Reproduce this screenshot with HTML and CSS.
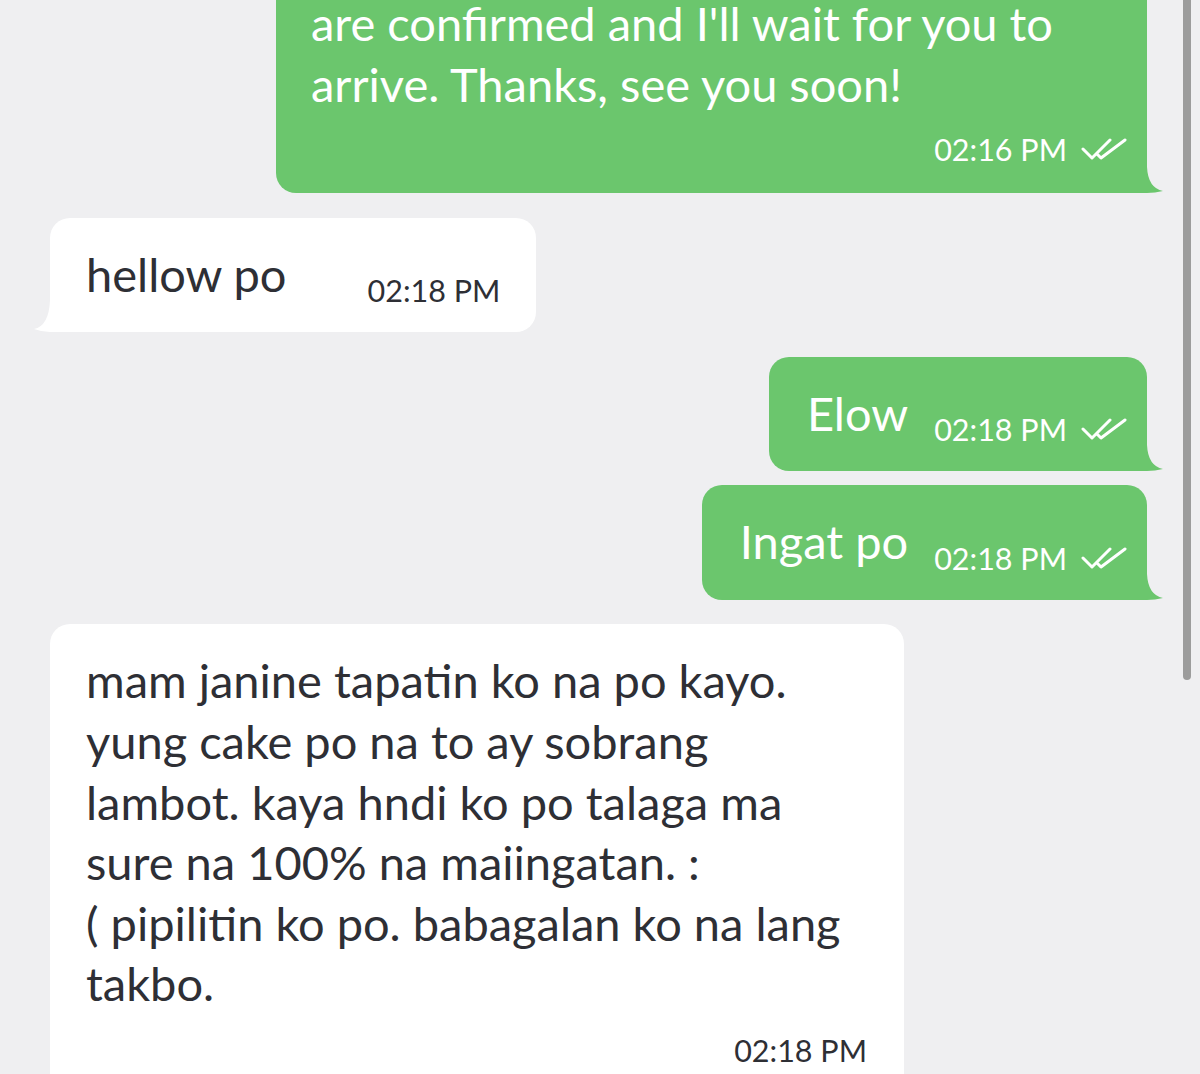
FILE: index.html
```html
<!DOCTYPE html>
<html lang="en">
<head>
    <meta charset="UTF-8">
    <meta name="viewport" content="width=device-width, initial-scale=1.0">
    <title>Chat</title>
    <link rel="stylesheet" href="styles.css">
</head>
<body>
  <div class="chat">
    <div class="chat-list">

      <div class="row sent">
        <div class="bubble bubble-sent long">
          <p class="text">are confirmed and I'll wait for you to arrive. Thanks, see you soon!</p>
          <div class="meta">
            <span class="time">02:16 PM</span>
            <svg class="read" viewBox="0 0 46 22"><path d="M2 11 L11 20 L29 2 M16 16 L20 20 L44 2"/></svg>
          </div>
          <svg class="tail tail-right" viewBox="0 0 16 26"><path d="M0 0 Q1 21 16 24 Q8 26 0 26 Z"/></svg>
        </div>
      </div>

      <div class="row received">
        <div class="bubble bubble-received short">
          <p class="text">hellow po</p>
          <div class="meta wide">
            <span class="time">02:18 PM</span>
          </div>
          <svg class="tail tail-left" viewBox="0 0 16 32"><path d="M16 0 Q15 26 0 29 Q8 32 16 32 Z"/></svg>
        </div>
      </div>

      <div class="row sent">
        <div class="bubble bubble-sent short">
          <p class="text">Elow</p>
          <div class="meta">
            <span class="time">02:18 PM</span>
            <svg class="read" viewBox="0 0 46 22"><path d="M2 11 L11 20 L29 2 M16 16 L20 20 L44 2"/></svg>
          </div>
          <svg class="tail tail-right" viewBox="0 0 16 26"><path d="M0 0 Q1 21 16 24 Q8 26 0 26 Z"/></svg>
        </div>
      </div>

      <div class="row sent same">
        <div class="bubble bubble-sent short">
          <p class="text">Ingat po</p>
          <div class="meta">
            <span class="time">02:18 PM</span>
            <svg class="read" viewBox="0 0 46 22"><path d="M2 11 L11 20 L29 2 M16 16 L20 20 L44 2"/></svg>
          </div>
          <svg class="tail tail-right" viewBox="0 0 16 26"><path d="M0 0 Q1 21 16 24 Q8 26 0 26 Z"/></svg>
        </div>
      </div>

      <div class="row received">
        <div class="bubble bubble-received long">
          <p class="text">mam janine tapatin ko na po kayo. yung cake po na to ay sobrang lambot. kaya hndi ko po talaga ma sure na 100% na maiingatan. :<br>( pipilitin ko po. babagalan ko na lang takbo.</p>
          <div class="meta">
            <span class="time">02:18 PM</span>
          </div>
        </div>
      </div>

    </div>
    <div class="scrollbar"></div>
  </div>
</body>
</html>
```

FILE: styles.css
```css
body {
  margin: 0;
  background-color: #efeff1;
  font-family: Lato, "Open Sans", sans-serif;
  overflow: hidden;
}
.chat {
  position: relative;
  height: 1074px;
  overflow: hidden;
}
.chat-list {
  display: flex;
  flex-direction: column;
  margin-top: -27px;
}
.row {
  display: flex;
  margin-top: 24.5px;
}
.row.same {
  margin-top: 14px;
}
.row:first-child {
  margin-top: 0;
}
.sent {
  justify-content: flex-end;
  padding-right: 53px;
}
.received {
  justify-content: flex-start;
  padding-left: 50px;
}
.bubble {
  position: relative;
  border-radius: 20px;
}
.bubble-sent {
  background: #6bc66d;
  color: #fff;
  border-bottom-right-radius: 0;
}
.bubble-received {
  background: #fff;
  color: #2e2f35;
}
.bubble-received.short {
  border-bottom-left-radius: 0;
}
.text {
  margin: 0;
  font-size: 47px;
  line-height: 60.6px;
}
.short {
  display: flex;
  align-items: flex-end;
  padding: 26px 20px 28px 38px;
}
.bubble-received.short {
  padding-right: 36px;
  padding-left: 36px;
}
.long {
  padding: 20px 20px 30px 35px;
}
.bubble-sent.long {
  width: 816px;
}
.bubble-received.long {
  width: 781px;
  padding: 26px 37px 40px 36px;
}
.meta {
  display: flex;
  align-items: center;
  justify-content: flex-end;
  gap: 14px;
  height: 28px;
  margin-left: 26px;
}
.meta.wide {
  margin-left: 81px;
}
.long .meta {
  margin-left: 0;
  margin-top: 21px;
}
.bubble-received.long .meta {
  margin-top: 22px;
}
.time {
  font-size: 30.5px;
  white-space: nowrap;
}
.read {
  width: 46px;
  height: 22px;
  fill: none;
  stroke: #fff;
  stroke-width: 3;
  stroke-linecap: round;
  stroke-linejoin: round;
}
.tail {
  position: absolute;
  bottom: 0;
  width: 16px;
}
.tail-right {
  right: -16px;
  height: 26px;
  fill: #6bc66d;
}
.tail-left {
  left: -16px;
  height: 32px;
  fill: #fff;
}
.scrollbar {
  position: absolute;
  top: -10px;
  right: 9px;
  width: 8px;
  height: 690px;
  border-radius: 4px;
  background: #9c9c9c;
}
```
